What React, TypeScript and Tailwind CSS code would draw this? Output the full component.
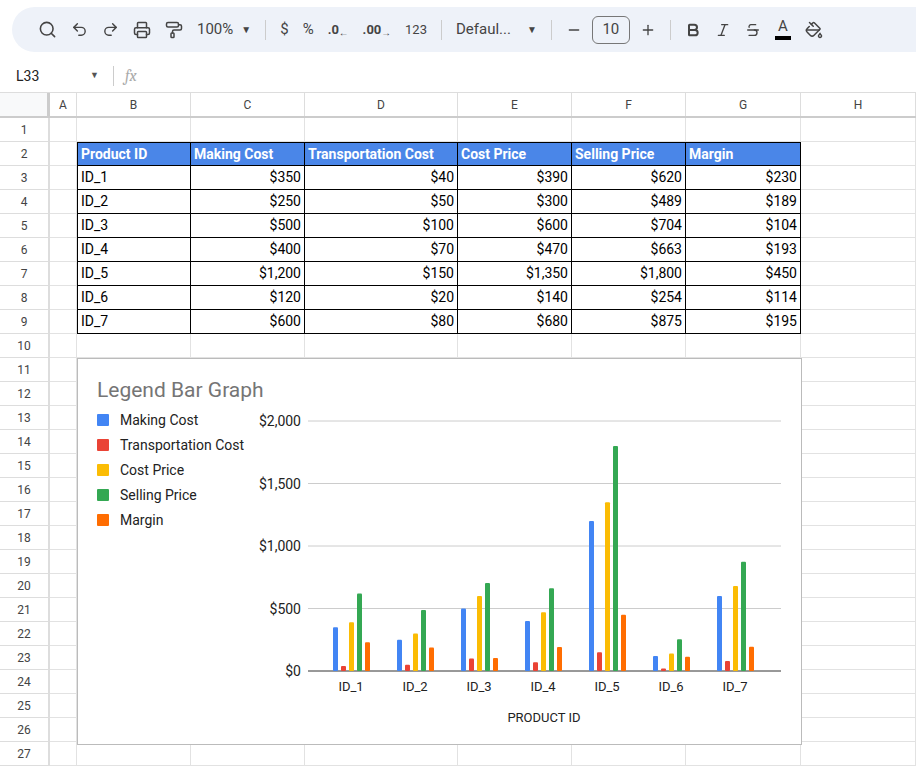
import React from "react";
import { Search, Undo2, Redo2, Printer, PaintRoller, ChevronDown, Minus, Plus, Bold, Italic, Strikethrough, PaintBucket } from "lucide-react";

const cols = [
  { l: "A", w: 27 },
  { l: "B", w: 114 },
  { l: "C", w: 114 },
  { l: "D", w: 153 },
  { l: "E", w: 114 },
  { l: "F", w: 114 },
  { l: "G", w: 115 },
  { l: "H", w: 115 },
];

const data = [
  ["ID_1", 350, 40, 390, 620, 230],
  ["ID_2", 250, 50, 300, 489, 189],
  ["ID_3", 500, 100, 600, 704, 104],
  ["ID_4", 400, 70, 470, 663, 193],
  ["ID_5", 1200, 150, 1350, 1800, 450],
  ["ID_6", 120, 20, 140, 254, 114],
  ["ID_7", 600, 80, 680, 875, 195],
] as const;

const heads = ["Product ID", "Making Cost", "Transportation Cost", "Cost Price", "Selling Price", "Margin"];
const colors = ["#4285f4", "#ea4335", "#fbbc04", "#34a853", "#ff6d01"];
const fmt = (n: number) => "$" + n.toLocaleString("en-US");

function Chart() {
  return (
    <svg width="723" height="385" className="block">
      <text x="19" y="38" fontSize="21" fill="#757575">Legend Bar Graph</text>
      {["Making Cost", "Transportation Cost", "Cost Price", "Selling Price", "Margin"].map((s, i) => (
        <g key={s}>
          <rect x="19" y={55 + i * 25} width="12" height="12" rx="1" fill={colors[i]} />
          <text x="42" y={66 + i * 25} fontSize="14" fill="#222">{s}</text>
        </g>
      ))}
      {[0, 500, 1000, 1500, 2000].map((v) => {
        const y = 312 - v * 0.125;
        return (
          <g key={v}>
            <line x1="230" x2="703" y1={y} y2={y} stroke={v === 0 ? "#333" : "#ccc"} strokeWidth="1" />
            <text x="223" y={y + 5} fontSize="14" textAnchor="end" fill="#222">{fmt(v)}</text>
          </g>
        );
      })}
      {data.map((r, g) => {
        const cx = 273 + g * 64;
        return (
          <g key={r[0]}>
            {[1, 2, 3, 4, 5].map((k, j) => {
              const h = (r[k] as number) * 0.125;
              return <rect key={k} x={cx - 18 + j * 8} y={312 - h} width="5" height={h} rx="1" fill={colors[j]} />;
            })}
            <text x={cx} y="332" fontSize="13" textAnchor="middle" fill="#222">{r[0]}</text>
          </g>
        );
      })}
      <text x="466" y="363" fontSize="13" textAnchor="middle" fill="#222">PRODUCT ID</text>
    </svg>
  );
}

export default function App() {
  const rows = Array.from({ length: 27 }, (_, i) => i + 1);
  return (
    <div className="w-[916px] h-[768px] overflow-hidden bg-white relative" style={{ fontFamily: "Roboto, 'Liberation Sans', sans-serif" }}>
      <div className="h-[60px] pt-[7px] pl-[12px]">
        <div className="h-[45px] bg-[#eef2f9] rounded-l-full flex items-center gap-[14px] pl-[26px] text-[#444] text-[15px]">
          <Search size={19} />
          <Undo2 size={17} />
          <Redo2 size={17} />
          <Printer size={18} />
          <PaintRoller size={18} />
          <span className="flex items-center gap-2">100% <span className="text-[10px]">▼</span></span>
          <span className="w-px h-5 bg-[#ccc]" />
          <span>$</span>
          <span>%</span>
          <span className="text-[13px] font-bold">.0<sub>←</sub></span>
          <span className="text-[13px] font-bold">.00<sub>→</sub></span>
          <span className="text-[13px]">123</span>
          <span className="w-px h-5 bg-[#ccc]" />
          <span className="flex items-center gap-4">Defaul... <span className="text-[10px]">▼</span></span>
          <span className="w-px h-5 bg-[#ccc]" />
          <Minus size={16} />
          <span className="border border-[#777] rounded-md w-[38px] h-[28px] flex items-center justify-center -mx-1">10</span>
          <Plus size={16} />
          <span className="w-px h-5 bg-[#ccc]" />
          <Bold size={16} strokeWidth={3} />
          <Italic size={16} />
          <Strikethrough size={16} />
          <span className="flex flex-col items-center leading-none text-[15px]">A<span className="w-[16px] h-[4px] bg-black mt-[2px]" /></span>
          <PaintBucket size={18} />
        </div>
      </div>
      <div className="h-[33px] flex items-center text-[14px] text-[#222] border-b border-[#ddd]">
        <span className="w-[90px] pl-[16px]">L33</span>
        <span className="text-[9px] text-[#555]">▼</span>
        <span className="w-px h-5 bg-[#ccc] ml-[14px] mr-[11px]" />
        <span className="italic text-[#aaa] font-serif text-[16px]">fx</span>
      </div>
      <div className="flex h-[25px] bg-white text-[12px] text-[#444] border-b-[2px] border-[#ccc]">
        <div className="w-[50px] shrink-0 border-r-[3px] border-[#ccc] bg-[#f8f9fa]" />
        {cols.map((c) => (
          <div key={c.l} style={{ width: c.w }} className="shrink-0 border-r border-[#ddd] flex items-center justify-center">{c.l}</div>
        ))}
      </div>
      {rows.map((r) => {
        const d = r >= 3 && r <= 9 ? data[r - 3] : null;
        return (
          <div key={r} className="flex h-[24px] text-[14px]">
            <div className="w-[50px] shrink-0 border-r-[2px] border-b border-[#ddd] text-[12px] text-[#444] flex items-center justify-center">{r}</div>
            {cols.map((c, ci) => {
              const inT = (r === 2 || d) && ci >= 1 && ci <= 6;
              let txt: React.ReactNode = "";
              if (r === 2 && inT) txt = heads[ci - 1];
              else if (d && inT) txt = ci === 1 ? d[0] : fmt(d[ci - 1] as number);
              return (
                <div
                  key={c.l}
                  style={{ width: c.w }}
                  className={
                    "shrink-0 flex items-center px-[3px] overflow-hidden whitespace-nowrap " +
                    (inT
                      ? "border-r border-b border-black " + (r === 2 ? "bg-[#4a86e8] text-white font-bold border-t " : "text-black ") + (ci === 1 ? "border-l " : "") + (ci > 1 && r !== 2 ? "justify-end" : "")
                      : "border-r border-b border-[#e2e2e2]")
                  }
                >
                  {txt}
                </div>
              );
            })}
          </div>
        );
      })}
      <div className="absolute left-[77px] top-[358px] border border-[#bbb] bg-white">
        <Chart />
      </div>
    </div>
  );
}
